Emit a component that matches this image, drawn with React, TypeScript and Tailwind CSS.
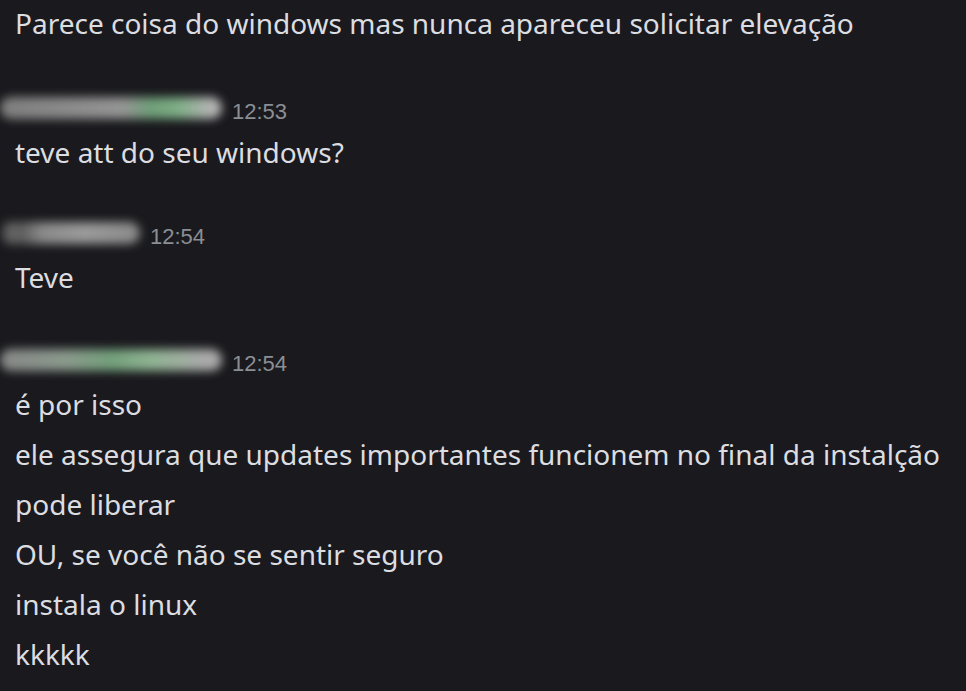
import React from 'react';

type Group = {
  nameWidth: number;
  nameStyle: 'greenRight' | 'plain' | 'greenMid';
  time: string;
  lines: string[];
  mt: string;
};

const groups: Group[] = [
  { nameWidth: 222, nameStyle: 'greenRight', time: '12:53', lines: ['teve att do seu windows?'], mt: 'mt-[49px]' },
  { nameWidth: 140, nameStyle: 'plain', time: '12:54', lines: ['Teve'], mt: 'mt-[45px]' },
  {
    nameWidth: 222,
    nameStyle: 'greenMid',
    time: '12:54',
    lines: [
      'é por isso',
      'ele assegura que updates importantes funcionem no final da instalção',
      'pode liberar',
      'OU, se você não se sentir seguro',
      'instala o linux',
      'kkkkk',
    ],
    mt: 'mt-[47px]',
  },
];

// blurred-out usernames
const BlurredName = ({ width, variant }: { width: number; variant: Group['nameStyle'] }) => {
  const bg =
    variant === 'greenRight'
      ? 'bg-[linear-gradient(90deg,#7e7e7e_0%,#959595_55%,#6f9f78_68%,#7fae86_80%,#b4b4b4_95%)]'
      : variant === 'greenMid'
      ? 'bg-[linear-gradient(90deg,#888888_0%,#8a9a8c_30%,#73a07b_50%,#8fb392_68%,#aaaaaa_92%)]'
      : 'bg-[linear-gradient(90deg,#3a3a3e_0%,#6a6a6a_8%,#5a5a5a_14%,#8a8a8a_30%,#9a9a9a_60%,#8a8a8a_100%)]';
  return (
    <div className="h-[30px] flex items-start shrink-0">
      <div className={`h-[22px] rounded-full blur-[5px] ${bg}`} style={{ width }} />
    </div>
  );
};

export default function App() {
  return (
    <div className="w-[966px] h-[691px] overflow-hidden bg-[#1a1a1e] text-[#dcdde0] font-['Noto_Sans',sans-serif] text-[28px] leading-[50px] pl-[15px]">
      <div className="-mt-[2px]">Parece coisa do windows mas nunca apareceu solicitar elevação</div>
      {groups.map((g, i) => (
        <div key={i}>
          <div className={`${g.mt} h-[30px] flex items-start -ml-[15px]`}>
            <BlurredName width={g.nameWidth} variant={g.nameStyle} />
            <span className="ml-[10px] h-[30px] leading-[30px] text-[22px] text-[#8b8e94] font-['Liberation_Sans',sans-serif]">
              {g.time}
            </span>
          </div>
          {g.lines.map((l, j) => (
            <div key={j} className="whitespace-nowrap">{l}</div>
          ))}
        </div>
      ))}
    </div>
  );
}
